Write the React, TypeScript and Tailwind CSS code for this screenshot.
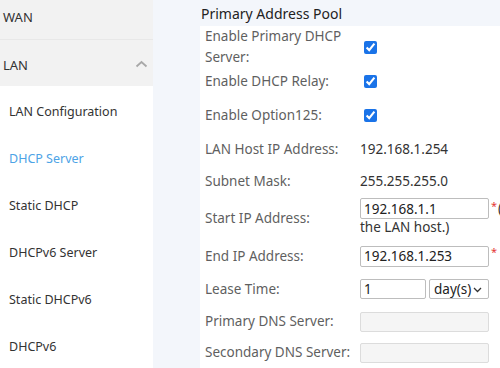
import React from 'react';

const menuItems = ['LAN Configuration', 'DHCP Server', 'Static DHCP', 'DHCPv6 Server', 'Static DHCPv6', 'DHCPv6'];

const Row: React.FC<{ label: React.ReactNode; h: string; children?: React.ReactNode; top?: boolean }> = ({ label, h, children, top }) => (
    <div className={`grid grid-cols-[160px_1fr] ${h}`}>
        <div className="flex items-center pl-[5px] pr-2 text-[#5f5f5f] leading-[21px]">{label}</div>
        <div className={`flex ${top ? 'items-start' : 'items-center'}`}>{children}</div>
    </div>
);

const Check = () => (
    <input type="checkbox" checked readOnly className="ml-[4px] w-[13px] h-[13px] accent-[#1a73e8]" />
);

export default function App() {
    return (
        <div className="flex w-[500px] h-[368px] overflow-hidden bg-[#f3f6fb] text-[13.5px] text-[#333]" style={{ fontFamily: '"Noto Sans", "Open Sans", sans-serif' }}>
            {/* Sidebar */}
            <div className="w-[153px] shrink-0 flex flex-col text-[12.5px]">
                <div className="h-[41px] flex items-end pb-[12px] pl-[3px] bg-[#f2f2f2] border-b border-[#e8e8e8] text-[13px]">WAN</div>
                <div className="h-[47px] flex items-center justify-between pt-[5px] pl-[3px] pr-[5px] bg-[#f2f2f2] text-[13px]">
                    <span>LAN</span>
                    <svg width="13" height="8" viewBox="0 0 13 8" fill="none" stroke="#a8a8a8" strokeWidth="1.8" className="-mt-[4px]">
                        <path d="M1.5 6.5 L6.5 2 L11.5 6.5" />
                    </svg>
                </div>
                <div className="flex-1 bg-white">
                    {menuItems.map((item) => (
                        <div key={item} className={`h-[47px] flex items-center pt-[5px] pl-[9px] ${item === 'DHCP Server' ? 'text-[#4da3e6]' : ''}`}>{item}</div>
                    ))}
                </div>
            </div>

            {/* Main */}
            <div className="flex-1 flex flex-col pl-[47px]">
                <div className="h-[26px] flex items-center pl-[1px] text-[14px] text-[#222]">Primary Address Pool</div>
                <div className="flex-1 bg-white flex flex-col">
                    <Row h="h-[38px]" label={<span>Enable Primary DHCP<br />Server:</span>}><Check /></Row>
                    <Row h="h-[34px]" label="Enable DHCP Relay:"><Check /></Row>
                    <Row h="h-[34px]" label="Enable Option125:"><Check /></Row>
                    <Row h="h-[34px]" label="LAN Host IP Address:">192.168.1.254</Row>
                    <Row h="h-[31px]" label="Subnet Mask:">255.255.255.0</Row>
                    <Row h="h-[43px]" label="Start IP Address:" top>
                        <div className="pt-[1px] flex flex-col">
                            <div className="flex items-start whitespace-nowrap">
                                <input readOnly value="192.168.1.1" className="w-[129px] h-[21px] border border-[#bdbdbd] rounded-[2px] px-[3px] text-[#222]" />
                                <span className="text-[#e53935] text-[11px] ml-[2px]">*</span>
                                <span className="ml-[1px]">(</span>
                            </div>
                            <div className="leading-[18px] -mt-[1px]">the LAN host.)</div>
                        </div>
                    </Row>
                    <Row h="h-[32px]" label="End IP Address:">
                        <div className="flex items-start">
                            <input readOnly value="192.168.1.253" className="w-[129px] h-[21px] border border-[#bdbdbd] rounded-[2px] px-[3px] text-[#222]" />
                            <span className="text-[#e53935] text-[11px] ml-[2px] -mt-[2px]">*</span>
                        </div>
                    </Row>
                    <Row h="h-[34px]" label="Lease Time:">
                        <div className="flex items-center gap-[3px]">
                            <input readOnly value="1" className="w-[66px] h-[20px] border border-[#bdbdbd] rounded-[2px] px-[3px] text-[#222]" />
                            <div className="relative w-[60px] h-[20px] border border-[#bdbdbd] rounded-[2px] flex items-center pl-[4px] text-[#222]">
                                <span>day(s)</span>
                                <svg width="9" height="6" viewBox="0 0 9 6" fill="none" stroke="#333" strokeWidth="1.3" className="absolute right-[6px] top-[7px]">
                                    <path d="M1 1 L4.5 4.5 L8 1" />
                                </svg>
                            </div>
                        </div>
                    </Row>
                    <Row h="h-[31px]" label="Primary DNS Server:">
                        <input disabled className="w-[129px] h-[20px] border border-[#dcdcdc] rounded-[2px] bg-[#f5f5f5]" />
                    </Row>
                    <Row h="h-[31px]" label="Secondary DNS Server:">
                        <input disabled className="w-[129px] h-[20px] border border-[#dcdcdc] rounded-[2px] bg-[#f5f5f5]" />
                    </Row>
                </div>
            </div>
        </div>
    );
}
